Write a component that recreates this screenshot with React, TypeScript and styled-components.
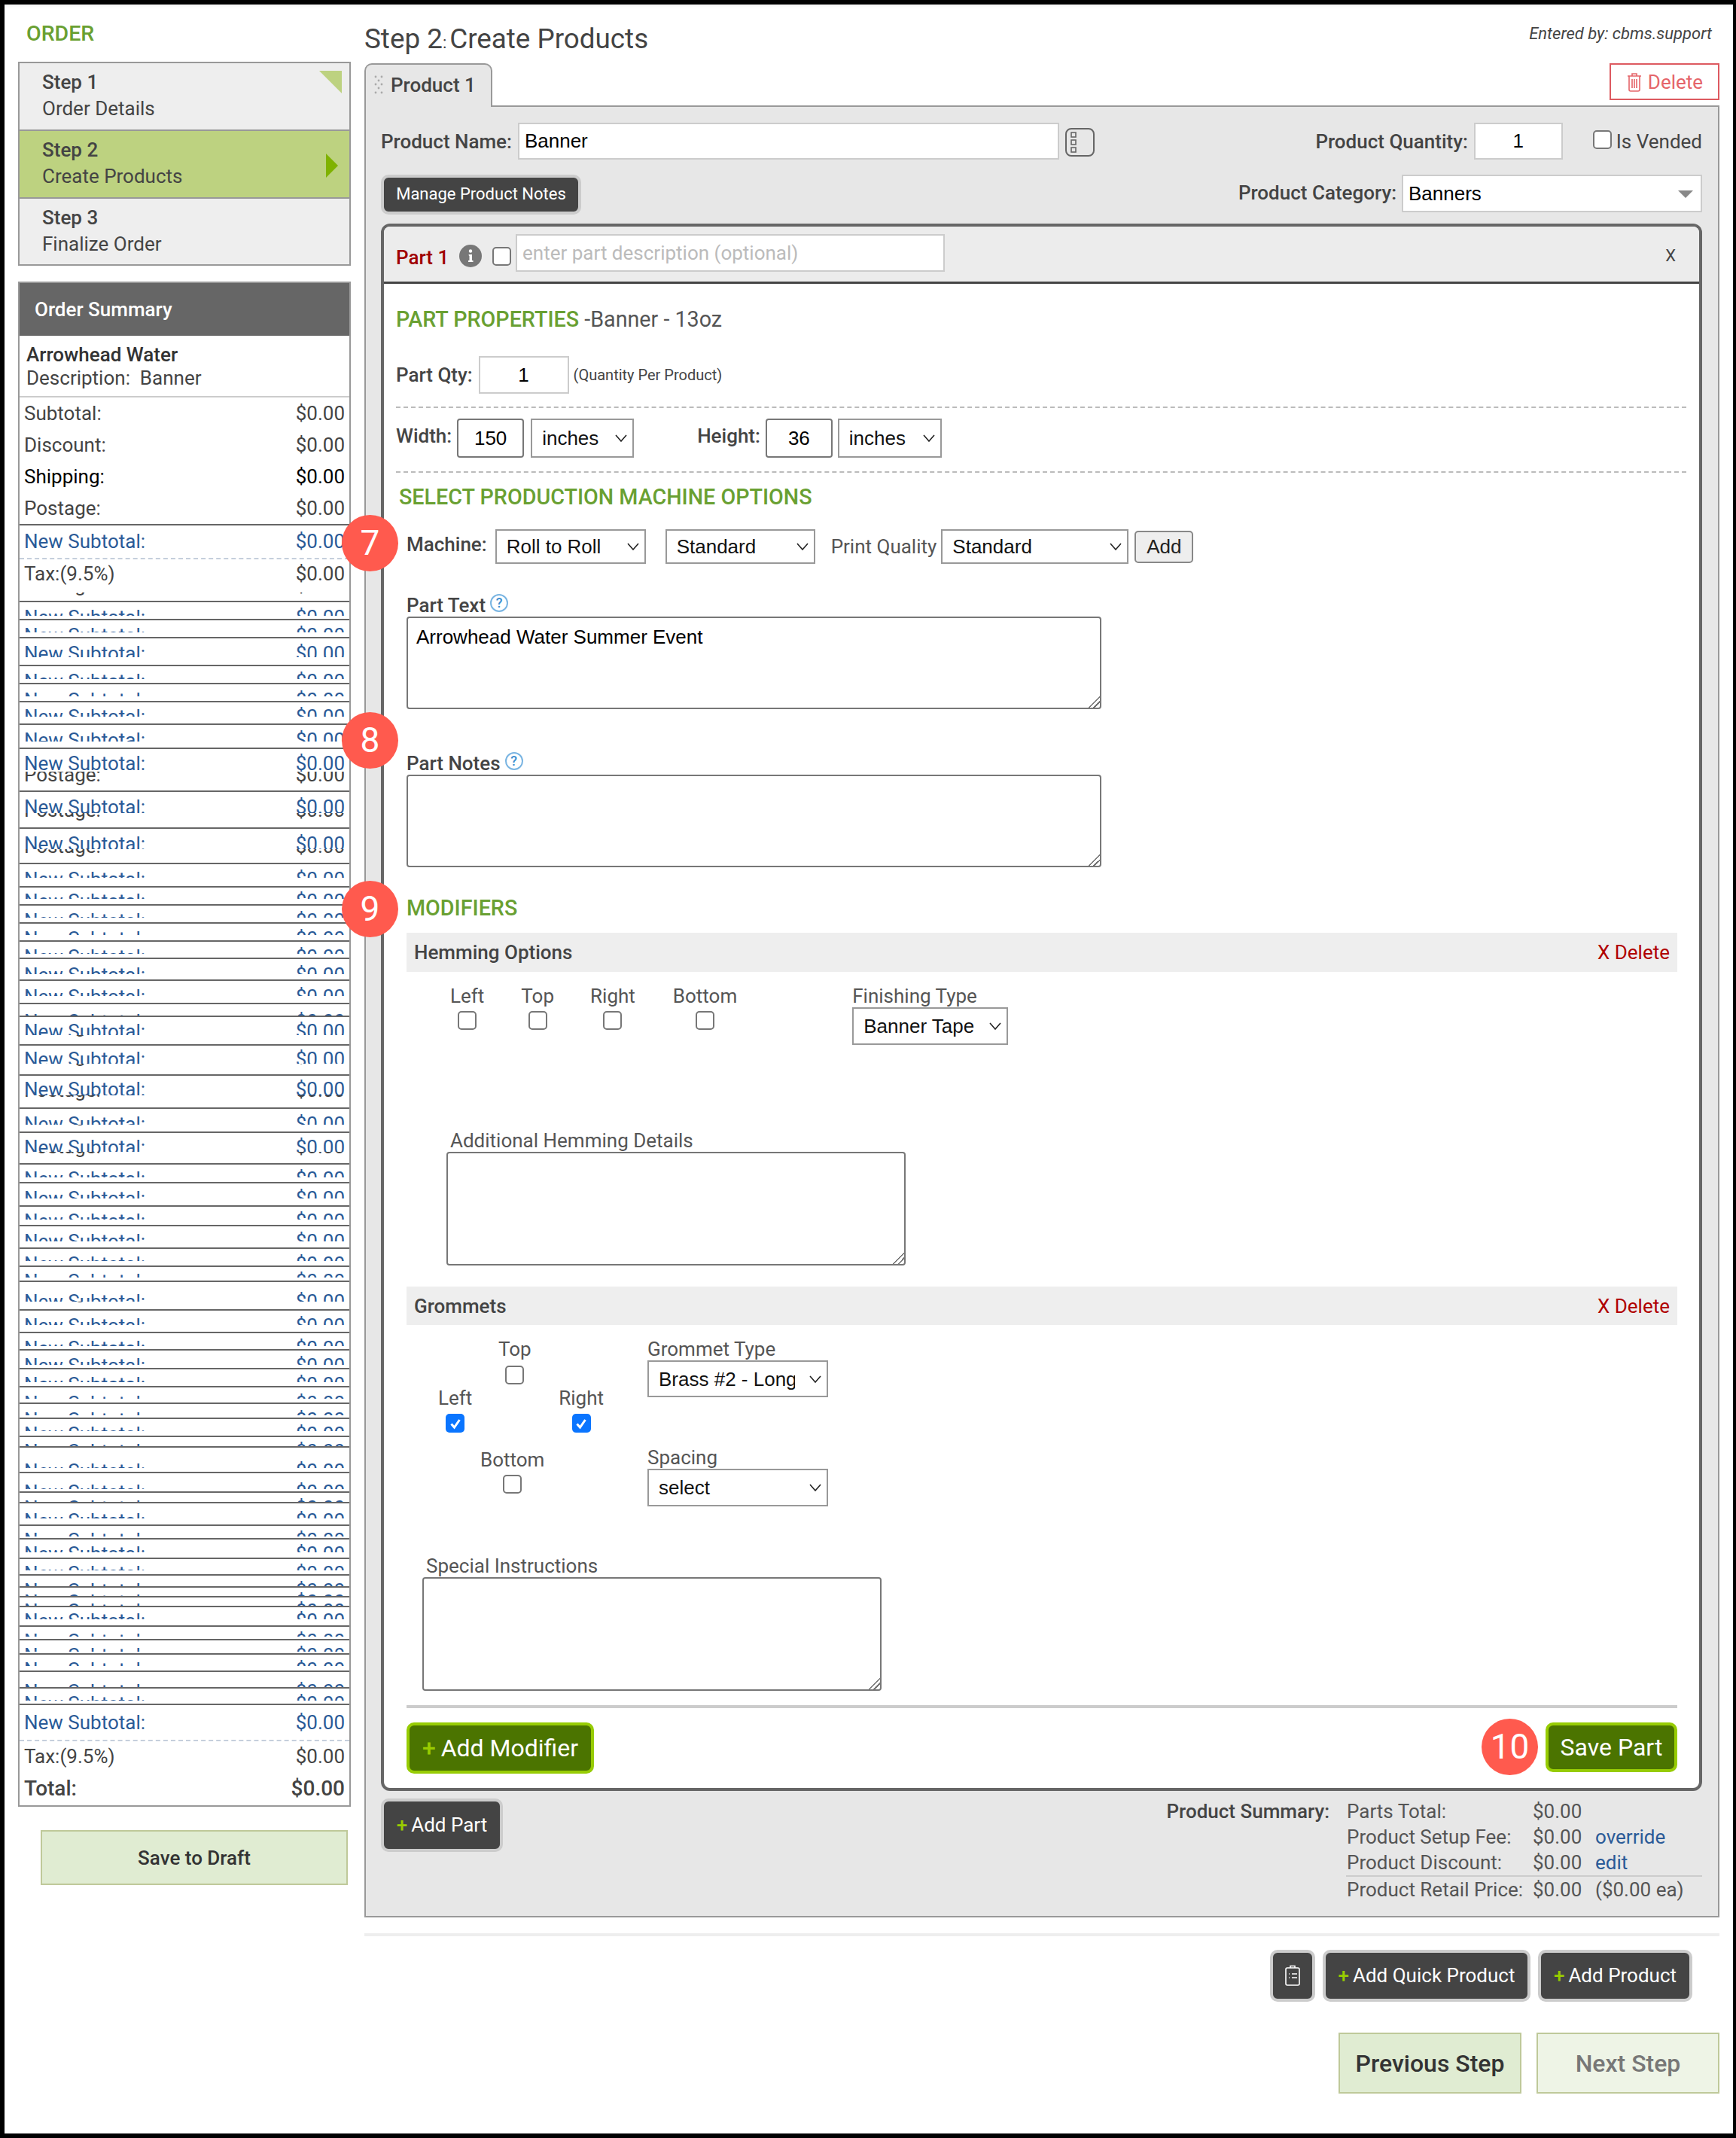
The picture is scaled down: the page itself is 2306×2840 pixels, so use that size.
import styled, { createGlobalStyle } from 'styled-components';

const controlFont = `26px "Liberation Sans", Arial, sans-serif`;

const GlobalStyle = createGlobalStyle`
  body {
    margin: 0;
    background: #fff;
    font-family: Roboto, "Liberation Sans", sans-serif;
    font-size: 26px;
    color: #444;
  }
  * {
    box-sizing: border-box;
  }
`;

const Frame = styled.div`
  display: flex;
  align-items: flex-start;
  width: 2306px;
  height: 2840px;
  padding-left: 18px;
  border-style: solid;
  border-color: #000;
  border-width: 6px 4px 6px 6px;
  box-shadow: inset 0 6px 6px -4px rgba(0, 0, 0, 0.06);
  overflow: hidden;
`;

/* sidebar */
const Sidebar = styled.aside`
  width: 442px;
  padding-top: 19px;
`;

const OrderTitle = styled.div`
  margin: 0 0 17px 11px;
  font-size: 28.5px;
  font-weight: 500;
  line-height: 40px;
  color: #69a032;
`;

const Steps = styled.div`
  border: 2px solid #999;
`;

const Step = styled.div<{ $active?: boolean }>`
  position: relative;
  height: 90px;
  padding: 8px 0 0 30px;
  line-height: 35px;
  background: ${(p) => (p.$active ? '#bdd280' : '#eee')};
  border-bottom: 2px solid #999;
  &:last-child {
    height: 87px;
    border-bottom: 0;
  }
`;

const StepName = styled.div`
  font-weight: 500;
`;

const DoneMark = styled.svg`
  position: absolute;
  top: 10px;
  right: 10px;
`;

const ActiveMark = styled.svg`
  position: absolute;
  top: 30px;
  right: 15px;
`;

const SummaryBox = styled.div`
  margin-top: 21px;
  border: 2px solid #999;
`;

const SummaryHeader = styled.div`
  height: 70px;
  padding-left: 20px;
  line-height: 70px;
  font-weight: 500;
  color: #fff;
  background: #666;
`;

const Customer = styled.div`
  height: 82px;
  padding: 10px 0 0 9px;
  line-height: 31px;
  border-bottom: 2px solid #ccc;
`;

const CustomerName = styled.div`
  font-weight: 500;
  color: #333;
`;

const Money = styled.div<{ $tone?: 'black' | 'blue' }>`
  display: flex;
  justify-content: space-between;
  height: 42px;
  padding: 0 6px 0 6px;
  line-height: 42px;
  color: ${(p) => (p.$tone === 'black' ? '#000' : p.$tone === 'blue' ? '#2a5a97' : '#444')};
`;

const BlueRow = styled.div<{ $height: number; $pad: number }>`
  height: ${(p) => p.$height}px;
  padding-top: ${(p) => p.$pad}px;
  border-top: 2px solid #666;
  border-bottom: 2px dashed #c5cfdc;
`;

const TaxRow = styled.div`
  position: relative;
  height: 55px;
  overflow: hidden;
`;

const TaxFront = styled.div`
  position: relative;
  z-index: 1;
  height: 46px;
  background: #fff;
  > div {
    margin-top: -2px;
  }
`;

const Squeezed = styled.div<{ $gap: number }>`
  position: relative;
  height: ${(p) => p.$gap}px;
  border-top: 2px solid #666;
  overflow: hidden;
`;

const SqueezedFront = styled.div<{ $clip: number; $top: number }>`
  position: relative;
  z-index: 1;
  height: ${(p) => p.$clip - 2}px;
  overflow: hidden;
  background: #fff;
  > div {
    margin-top: ${(p) => p.$top - 13.4}px;
  }
`;

const Ghost = styled.div<{ $top: number }>`
  position: absolute;
  top: ${(p) => p.$top}px;
  left: 0;
  right: 0;
`;

const ClosingTax = styled(Money)`
  height: 40px;
  line-height: 40px;
`;

const TotalRow = styled(Money)`
  height: 45px;
  line-height: 45px;
  font-size: 28px;
  font-weight: 500;
`;

const DraftButton = styled.button`
  display: block;
  width: 408px;
  height: 73px;
  margin: 31px 0 0 30px;
  font: 500 26px Roboto, sans-serif;
  color: #333;
  background: #e0ecd2;
  border: 2px solid #bfc99a;
`;

/* main column */
const Main = styled.main`
  width: 1800px;
  margin-left: 18px;
`;

const TitleBar = styled.div`
  display: flex;
  justify-content: space-between;
  height: 78px;
`;

const Title = styled.h1`
  margin: 24px 0 0;
  font-size: 36.8px;
  font-weight: 400;
  line-height: 44px;
  color: #444;
`;

const SmallColon = styled.span`
  margin-right: 4px;
  font-size: 22px;
`;

const EnteredBy = styled.div`
  margin: 25px 10px 0 0;
  font-size: 22px;
  font-style: italic;
  line-height: 28px;
`;

const TabBar = styled.div`
  display: flex;
  justify-content: space-between;
  align-items: flex-start;
  height: 56px;
`;

const Tab = styled.div`
  position: relative;
  z-index: 1;
  display: flex;
  align-items: center;
  width: 170px;
  height: 58px;
  padding: 0 0 3px 10px;
  font-weight: 500;
  background: #e7e7e7;
  border: 2px solid #999;
  border-bottom: 0;
  border-radius: 10px 10px 0 0;
`;

const DragDots = styled.svg`
  margin-right: 9px;
`;

const DeleteButton = styled.button`
  display: flex;
  align-items: center;
  justify-content: center;
  gap: 7px;
  width: 146px;
  height: 49px;
  padding: 0;
  font: 400 26px Roboto, sans-serif;
  color: #e5656a;
  background: #fff;
  border: 2px solid #dd5a60;
`;

const Panel = styled.section`
  height: 2407px;
  padding: 21px 21px 0 20px;
  background: #e7e7e7;
  border: 2px solid #999;
`;

const FieldRow = styled.div<{ $mt?: number; $height?: number }>`
  position: relative;
  display: flex;
  align-items: center;
  height: ${(p) => p.$height ?? 49}px;
  margin-top: ${(p) => p.$mt ?? 0}px;
`;

const Label = styled.label`
  font-weight: 500;
  white-space: nowrap;
`;

const TextField = styled.input<{ $width: number; $ml?: number; $center?: boolean; $height?: number }>`
  flex: none;
  width: ${(p) => p.$width}px;
  height: ${(p) => p.$height ?? 49}px;
  margin-left: ${(p) => p.$ml ?? 8}px;
  padding: 0 7px;
  font: ${controlFont};
  color: #000;
  text-align: ${(p) => (p.$center ? 'center' : 'left')};
  background: #fff;
  border: 2px solid #ccc;
  &::placeholder {
    font-family: Roboto, sans-serif;
    color: #bbb;
  }
`;

const NameIcon = styled.svg`
  flex: none;
  margin: 2px 0 0 8px;
`;

const Push = styled.div`
  margin-left: auto;
`;

const Vended = styled.label`
  display: flex;
  align-items: center;
  gap: 6px;
  margin-left: 40px;
  white-space: nowrap;
  > span {
    margin-top: -4px;
  }
`;

const DarkButton = styled.button<{ $width: number; $height?: number; $size?: number }>`
  display: flex;
  align-items: center;
  justify-content: center;
  gap: 5px;
  flex: none;
  width: ${(p) => p.$width}px;
  height: ${(p) => p.$height ?? 69}px;
  padding: 0 0 2px;
  font: 400 ${(p) => p.$size ?? 26}px Roboto, sans-serif;
  color: #fff;
  background: #444;
  border: 4px solid #ccc;
  border-radius: 10px;
`;

const Plus = styled.span`
  font-weight: 500;
  color: #9c0;
`;

const CategoryLabel = styled(Label)`
  margin-bottom: 6px;
`;

const CategoryBox = styled.div`
  position: relative;
  width: 399px;
  height: 50px;
  margin-left: 7px;
  margin-bottom: 3px;
  padding: 0 7px;
  font: ${controlFont};
  line-height: 46px;
  color: #000;
  background: #fff;
  border: 2px solid #ccc;
  &::after {
    content: '';
    position: absolute;
    top: 19px;
    right: 10px;
    border-top: 10px solid #888;
    border-left: 10px solid transparent;
    border-right: 10px solid transparent;
  }
`;

const Card = styled.div`
  height: 2082px;
  margin-top: 12px;
  background: #fff;
  border: 4px solid #666;
  border-radius: 12px;
`;

const CardHeader = styled.div`
  display: flex;
  align-items: flex-start;
  height: 76px;
  padding: 10px 31px 0 16px;
  background: #ececec;
  border-bottom: 3px solid #444;
  border-radius: 8px 8px 0 0;
`;

const PartName = styled.div`
  width: 84px;
  margin-top: 13px;
  font-weight: 500;
  line-height: 36px;
  color: #a00000;
`;

const InfoIcon = styled.svg`
  flex: none;
  margin-top: 14px;
`;

const Box = styled.span<{ $checked?: boolean; $mt?: number; $ml?: number }>`
  display: flex;
  align-items: center;
  justify-content: center;
  flex: none;
  width: 25px;
  height: 25px;
  margin-top: ${(p) => p.$mt ?? 0}px;
  margin-left: ${(p) => p.$ml ?? 0}px;
  background: ${(p) => (p.$checked ? '#0a75ff' : '#fff')};
  border: ${(p) => (p.$checked ? '0' : '2px solid #777')};
  border-radius: 5px;
`;

const Close = styled.div`
  margin: 11px 0 0 auto;
  font-size: 22px;
  line-height: 36px;
`;

const CardBody = styled.div`
  padding: 27px 17px 0 16px;
`;

const SectionTitle = styled.h2<{ $mt?: number; $ml?: number }>`
  position: relative;
  margin: ${(p) => p.$mt ?? 0}px 0 0 ${(p) => p.$ml ?? 0}px;
  font-size: 28.7px;
  font-weight: 500;
  line-height: 40px;
  color: #69a032;
`;

const Subtle = styled.span`
  font-weight: 400;
  color: #555;
`;

const Hint = styled.span`
  margin-left: 6px;
  font-size: 20px;
`;

const DashedLine = styled.div<{ $mt: number }>`
  margin-top: ${(p) => p.$mt}px;
  border-top: 2px dashed #bbb;
`;

const SizeField = styled(TextField)`
  border: 2px solid #777;
  border-radius: 4px;
`;

const OffsetLabel = styled(Label)<{ $ml?: number }>`
  margin-left: ${(p) => p.$ml ?? 0}px;
  margin-bottom: 6px;
`;

const SelectWrap = styled.div<{ $width: number; $height?: number; $ml?: number }>`
  position: relative;
  flex: none;
  width: ${(p) => p.$width}px;
  height: ${(p) => p.$height ?? 46}px;
  margin-left: ${(p) => p.$ml ?? 0}px;
`;

const Select = styled.select`
  appearance: none;
  display: block;
  width: 100%;
  height: 100%;
  padding: 0 42px 0 13px;
  font: ${controlFont};
  color: #111;
  background: #fff;
  border: 2px solid #999;
  border-radius: 0;
`;

const Chevron = styled.svg`
  position: absolute;
  top: 50%;
  right: 9px;
  margin-top: -5px;
  pointer-events: none;
`;

const Inset = styled.div`
  margin: 0 12px 0 14px;
`;

const PlainLabel = styled.span<{ $ml?: number }>`
  margin-left: ${(p) => p.$ml ?? 0}px;
  white-space: nowrap;
  color: #555;
`;

const AddButton = styled.button`
  width: 78px;
  height: 43px;
  margin-left: 8px;
  padding: 0;
  font: ${controlFont};
  color: #222;
  background: #eee;
  border: 2px solid #888;
  border-radius: 5px;
`;

const FieldLabel = styled.div<{ $mt?: number }>`
  position: relative;
  display: flex;
  align-items: center;
  gap: 6px;
  height: 30px;
  margin-top: ${(p) => p.$mt ?? 0}px;
  font-weight: 500;
`;

const HelpIcon = styled.span`
  width: 24px;
  height: 24px;
  margin-top: -6px;
  font-size: 18px;
  font-weight: 500;
  line-height: 20px;
  text-align: center;
  color: #3b8ed0;
  border: 2px solid #7ab5e2;
  border-radius: 50%;
`;

const Area = styled.textarea<{ $width: number; $height: number }>`
  display: block;
  width: ${(p) => p.$width}px;
  height: ${(p) => p.$height}px;
  padding: 10px 11px;
  font: ${controlFont};
  color: #000;
  background: #fff;
  border: 2px solid #777;
  border-radius: 4px;
  &::-webkit-resizer {
    background: linear-gradient(
      135deg,
      transparent 48%,
      #777 48%,
      #777 56%,
      transparent 56%,
      transparent 70%,
      #777 70%,
      #777 78%,
      transparent 78%
    );
  }
`;

const ModifierBar = styled.div<{ $mt: number; $height: number }>`
  display: flex;
  justify-content: space-between;
  align-items: center;
  height: ${(p) => p.$height}px;
  margin-top: ${(p) => p.$mt}px;
  padding: 0 10px;
  font-weight: 500;
  background: #eee;
`;

const RemoveLink = styled.span`
  font-weight: 400;
  color: #b00000;
`;

const HemRow = styled.div`
  display: flex;
  align-items: flex-start;
  margin: 17px 0 0 58px;
`;

const CheckColumn = styled.div<{ $ml?: number }>`
  display: flex;
  flex-direction: column;
  align-items: center;
  margin-left: ${(p) => p.$ml ?? 0}px;
  line-height: 30px;
  color: #555;
  white-space: nowrap;
`;

const Stacked = styled.div<{ $ml?: number; $mt?: number }>`
  margin-left: ${(p) => p.$ml ?? 0}px;
  margin-top: ${(p) => p.$mt ?? 0}px;
  line-height: 30px;
  color: #555;
  white-space: nowrap;
`;

const NotesBlock = styled.div<{ $ml: number; $mt: number }>`
  margin: ${(p) => p.$mt}px 0 0 ${(p) => p.$ml}px;
  line-height: 30px;
  color: #555;
`;

const NotesLabel = styled.div`
  margin-left: 5px;
`;

const GrommetGrid = styled.div`
  display: flex;
  align-items: flex-start;
  margin: 17px 0 0 42px;
`;

const Cross = styled.div`
  width: 220px;
`;

const CrossRow = styled.div<{ $ml?: number; $mt?: number; $spread?: boolean }>`
  display: flex;
  justify-content: ${(p) => (p.$spread ? 'space-between' : 'flex-start')};
  margin-left: ${(p) => p.$ml ?? 0}px;
  margin-top: ${(p) => p.$mt ?? 0}px;
`;

const Divider = styled.div`
  height: 4px;
  margin-top: 19px;
  background: #ccc;
`;

const CardFooter = styled.div`
  display: flex;
  justify-content: space-between;
  align-items: flex-start;
  margin-top: 19px;
`;

const GreenButton = styled.button<{ $width: number; $height: number }>`
  position: relative;
  display: flex;
  align-items: center;
  justify-content: center;
  gap: 7px;
  width: ${(p) => p.$width}px;
  height: ${(p) => p.$height}px;
  padding: 0;
  font: 400 32px Roboto, sans-serif;
  color: #fff;
  background: #4b7400;
  border: 4px solid #97cc04;
  border-radius: 10px;
`;

const StepBadge = styled.div<{ $left: number; $top: number }>`
  position: absolute;
  z-index: 5;
  left: ${(p) => p.$left}px;
  top: ${(p) => p.$top}px;
  width: 75px;
  height: 75px;
  font-size: 46px;
  font-weight: 400;
  line-height: 75px;
  text-align: center;
  color: #fff;
  background: #ff5a4e;
  border-radius: 50%;
`;

const PanelFooter = styled.div`
  display: flex;
  justify-content: space-between;
  align-items: flex-start;
  margin-top: 10px;
`;

const ProductSummary = styled.div`
  display: flex;
  align-items: flex-start;
  margin-right: 1px;
  line-height: 34px;
`;

const SummaryLabel = styled.div`
  margin-right: 22px;
  font-weight: 500;
`;

const SummaryGrid = styled.div`
  display: grid;
  grid-template-columns: 247px 83px 142px;
  width: 472px;
  padding-left: 1px;
  color: #555;
`;

const SummaryLine = styled.div`
  grid-column: 1 / -1;
  height: 2px;
  margin-left: -1px;
  background: #ccc;
`;

const TextLink = styled.a`
  color: #2a5a97;
`;

const PageLine = styled.div`
  height: 4px;
  margin-top: 21px;
  background: #eee;
`;

const ActionRow = styled.div`
  display: flex;
  justify-content: flex-end;
  gap: 10px;
  margin: 18px 36px 0 0;
`;

const StepNav = styled.div`
  display: flex;
  justify-content: flex-end;
  gap: 20px;
  margin-top: 41px;
`;

const NavButton = styled.button<{ $off?: boolean }>`
  width: 243px;
  height: 81px;
  padding: 0;
  font: 500 32px Roboto, sans-serif;
  color: ${(p) => (p.$off ? '#777' : '#333')};
  background: ${(p) => (p.$off ? '#eef4e6' : '#e0ecd2')};
  border: 2px solid #bfc99a;
`;

// line y, cap top, clip bottom, and where the row behind it sits
const squeezed: [number, number, number, number?][] = [
  [798, 12, 20], [822, 12, 18], [846, 12.5, 27, 3], [883, 12.5, 19], [907, 13, 18],
  [931, 11, 21], [961, 12.5, 23.5], [993, 11.7, 31.5, 26], [1050, 12, 30, 16], [1099, 12, 28.5, 15],
  [1146, 12.5, 20], [1177, 10.5, 17], [1201, 12.4, 18], [1225, 12, 17], [1249, 12.6, 17.6],
  [1272, 13, 22], [1301, 13, 22, -2], [1332, 15, 17], [1349, 11.7, 26, 4], [1387, 10.5, 26.4, 5],
  [1427, 10.6, 27.5, 11], [1471, 12, 23, 0], [1503, 11.6, 27, 10], [1545, 11.7, 18.6], [1570, 12.3, 21.8, -2],
  [1601, 11.8, 19], [1627, 12.6, 22.3, -2], [1657, 12.3, 18], [1681, 11.5, 15.7], [1701, 18, 27.5, 5],
  [1739, 12.2, 21], [1769, 12.3, 18.7], [1792, 12, 20.6], [1817, 12.5, 19], [1841, 13, 17.4],
  [1863, 13, 16.5], [1883, 12, 18], [1907, 11.6, 14], [1921, 23, 29], [1955, 17.5, 23],
  [1981, 12, 14], [1995, 15, 22], [2025, 11.6, 16], [2043, 11.7, 19], [2069, 11.6, 17],
  [2091, 12.6, 15.7], [2107, 11, 13], [2120, 10.7, 13.4], [2133, 10.7, 18.3], [2159, 11.5, 15],
  [2177, 12.7, 17], [2196, 12, 16.6], [2219, 18.8, 22], [2241, 12, 17.5],
];

const Down = () => (
  <Chevron width="16" height="10" viewBox="0 0 16 10" fill="none" stroke="#222" strokeWidth="1.6">
    <path d="M1 1l7 8 7-8" />
  </Chevron>
);

const Drop = ({ value, width, height, ml }: { value: string; width: number; height?: number; ml?: number }) => (
  <SelectWrap $width={width} $height={height} $ml={ml}>
    <Select defaultValue={value}>
      <option>{value}</option>
    </Select>
    <Down />
  </SelectWrap>
);

const Tick = () => (
  <svg width="18" height="18" viewBox="0 0 18 18" fill="none" stroke="#fff" strokeWidth="3">
    <path d="M3.5 9.5l4 4.5 7-10" />
  </svg>
);

const SubtotalLine = () => (
  <Money $tone="blue">
    <span>New Subtotal:</span>
    <span>$0.00</span>
  </Money>
);

const PostageLine = () => (
  <Money>
    <span>Postage:</span>
    <span>$0.00</span>
  </Money>
);

const App = () => {
  return (
    <>
      <GlobalStyle />
      <Frame>
        <Sidebar>
          <OrderTitle>ORDER</OrderTitle>
          <Steps>
            <Step>
              <StepName>Step 1</StepName>
              Order Details
              <DoneMark width="30" height="30" viewBox="0 0 30 30">
                <path d="M0 0h30v30z" fill="#bdd280" />
              </DoneMark>
            </Step>
            <Step $active>
              <StepName>Step 2</StepName>
              Create Products
              <ActiveMark width="16" height="32" viewBox="0 0 16 32">
                <path d="M0 0l16 16L0 32z" fill="#7fb200" />
              </ActiveMark>
            </Step>
            <Step>
              <StepName>Step 3</StepName>
              Finalize Order
            </Step>
          </Steps>

          <SummaryBox>
            <SummaryHeader>Order Summary</SummaryHeader>
            <Customer>
              <CustomerName>Arrowhead Water</CustomerName>
              Description:&nbsp; Banner
            </Customer>
            <Money>
              <span>Subtotal:</span>
              <span>$0.00</span>
            </Money>
            <Money>
              <span>Discount:</span>
              <span>$0.00</span>
            </Money>
            <Money $tone="black">
              <span>Shipping:</span>
              <span>$0.00</span>
            </Money>
            <PostageLine />
            <BlueRow $height={47} $pad={0}>
              <SubtotalLine />
            </BlueRow>
            <TaxRow>
              <Ghost $top={13}>
                <PostageLine />
              </Ghost>
              <TaxFront>
                <Money>
                  <span>Tax:(9.5%)</span>
                  <span>$0.00</span>
                </Money>
              </TaxFront>
            </TaxRow>
            {squeezed.map(([line, top, clip, ghost], i) => {
              const next = i + 1 < squeezed.length ? squeezed[i + 1][0] : 2263;
              return (
                <Squeezed key={line} $gap={next - line}>
                  {ghost !== undefined && (
                    <Ghost $top={ghost - 13.4}>
                      <PostageLine />
                    </Ghost>
                  )}
                  <SqueezedFront $clip={clip} $top={top}>
                    <SubtotalLine />
                  </SqueezedFront>
                </Squeezed>
              );
            })}
            <BlueRow $height={50} $pad={2}>
              <SubtotalLine />
            </BlueRow>
            <ClosingTax>
              <span>Tax:(9.5%)</span>
              <span>$0.00</span>
            </ClosingTax>
            <TotalRow>
              <span>Total:</span>
              <span>$0.00</span>
            </TotalRow>
          </SummaryBox>
          <DraftButton>Save to Draft</DraftButton>
        </Sidebar>

        <Main>
          <TitleBar>
            <Title>
              Step 2<SmallColon>:</SmallColon>Create Products
            </Title>
            <EnteredBy>Entered by: cbms.support</EnteredBy>
          </TitleBar>
          <TabBar>
            <Tab>
              <DragDots width="14" height="26" viewBox="0 0 14 26" fill="#aaa">
                <circle cx="3" cy="2" r="1.4" />
                <circle cx="11" cy="2" r="1.4" />
                <circle cx="7" cy="7" r="1.4" />
                <circle cx="3" cy="12" r="1.4" />
                <circle cx="11" cy="12" r="1.4" />
                <circle cx="7" cy="17" r="1.4" />
                <circle cx="3" cy="23" r="1.4" />
                <circle cx="11" cy="23" r="1.4" />
              </DragDots>
              Product 1
            </Tab>
            <DeleteButton>
              <svg width="22" height="26" viewBox="0 0 22 26" fill="none" stroke="#e5656a" strokeWidth="1.6">
                <path d="M2 5h18M8 5V2h6v3M4 5v18a2 2 0 0 0 2 2h10a2 2 0 0 0 2-2V5M8 9v12M11 9v12M14 9v12" />
              </svg>
              Delete
            </DeleteButton>
          </TabBar>

          <Panel>
            <FieldRow>
              <Label>Product Name:</Label>
              <TextField $width={719} defaultValue="Banner" />
              <NameIcon width="40" height="40" viewBox="0 0 40 40" fill="none" stroke="#666" strokeWidth="2">
                <rect x="1" y="2" width="37" height="36" rx="7" />
                <rect x="8" y="7" width="6" height="6" strokeWidth="1.6" />
                <rect x="8" y="17" width="6" height="6" strokeWidth="1.6" />
                <rect x="8" y="27" width="6" height="6" strokeWidth="1.6" />
              </NameIcon>
              <Push />
              <Label>Product Quantity:</Label>
              <TextField $width={118} $center defaultValue="1" />
              <Vended>
                <Box />
                Is Vended
              </Vended>
            </FieldRow>
            <FieldRow $mt={20} $height={53}>
              <DarkButton $width={266} $height={53} $size={22}>
                Manage Product Notes
              </DarkButton>
              <Push />
              <CategoryLabel>Product Category:</CategoryLabel>
              <CategoryBox>Banners</CategoryBox>
            </FieldRow>

            <Card>
              <CardHeader>
                <PartName>Part 1</PartName>
                <InfoIcon width="30" height="30" viewBox="0 0 30 30">
                  <circle cx="15" cy="15" r="15" fill="#777" />
                  <circle cx="15" cy="8.5" r="2.2" fill="#fff" />
                  <path d="M12.5 13h4.5v8h1.5v2h-6.5v-2h1.5v-6h-.5z" fill="#fff" />
                </InfoIcon>
                <Box $mt={17} $ml={14} />
                <TextField $width={570} $ml={6} $height={50} placeholder="enter part description (optional)" />
                <Close>X</Close>
              </CardHeader>

              <CardBody>
                <SectionTitle>
                  PART PROPERTIES <Subtle>-Banner - 13oz</Subtle>
                </SectionTitle>
                <FieldRow $mt={29} $height={50}>
                  <Label>Part Qty:</Label>
                  <TextField $width={120} $ml={8} $center $height={50} defaultValue="1" />
                  <Hint>(Quantity Per Product)</Hint>
                </FieldRow>
                <DashedLine $mt={17} />
                <FieldRow $mt={14} $height={52}>
                  <OffsetLabel>Width:</OffsetLabel>
                  <SizeField $width={89} $ml={7} $center $height={52} defaultValue="150" />
                  <Drop value="inches" width={137} height={52} ml={9} />
                  <OffsetLabel $ml={84}>Height:</OffsetLabel>
                  <SizeField $width={89} $ml={7} $center $height={52} defaultValue="36" />
                  <Drop value="inches" width={138} height={52} ml={7} />
                </FieldRow>
                <DashedLine $mt={18} />
                <SectionTitle $mt={12} $ml={4}>
                  SELECT PRODUCTION MACHINE OPTIONS
                </SectionTitle>
                <Inset>
                  <FieldRow $mt={23} $height={46}>
                    <StepBadge $left={-86} $top={-19}>7</StepBadge>
                    <OffsetLabel>Machine:</OffsetLabel>
                    <Drop value="Roll to Roll" width={200} ml={11} />
                    <Drop value="Standard" width={199} ml={26} />
                    <PlainLabel $ml={21}>Print Quality</PlainLabel>
                    <Drop value="Standard" width={249} ml={6} />
                    <AddButton>Add</AddButton>
                  </FieldRow>

                  <FieldLabel $mt={40}>
                    Part Text
                    <HelpIcon>?</HelpIcon>
                  </FieldLabel>
                  <Area $width={923} $height={123} defaultValue="Arrowhead Water Summer Event" />

                  <FieldLabel $mt={57}>
                    <StepBadge $left={-86} $top={-53}>8</StepBadge>
                    Part Notes
                    <HelpIcon>?</HelpIcon>
                  </FieldLabel>
                  <Area $width={923} $height={123} />

                  <SectionTitle $mt={34}>
                    <StepBadge $left={-86} $top={-16}>9</StepBadge>
                    MODIFIERS
                  </SectionTitle>

                  <ModifierBar $mt={13} $height={52}>
                    Hemming Options
                    <RemoveLink>X Delete</RemoveLink>
                  </ModifierBar>
                  <HemRow>
                    <CheckColumn>
                      Left
                      <Box $mt={5} />
                    </CheckColumn>
                    <CheckColumn $ml={49}>
                      Top
                      <Box $mt={5} />
                    </CheckColumn>
                    <CheckColumn $ml={48}>
                      Right
                      <Box $mt={5} />
                    </CheckColumn>
                    <CheckColumn $ml={50}>
                      Bottom
                      <Box $mt={5} />
                    </CheckColumn>
                    <Stacked $ml={153}>
                      Finishing Type
                      <Drop value="Banner Tape" width={207} height={50} />
                    </Stacked>
                  </HemRow>
                  <NotesBlock $ml={53} $mt={112}>
                    <NotesLabel>Additional Hemming Details</NotesLabel>
                    <Area $width={610} $height={151} />
                  </NotesBlock>

                  <ModifierBar $mt={28} $height={51}>
                    Grommets
                    <RemoveLink>X Delete</RemoveLink>
                  </ModifierBar>
                  <GrommetGrid>
                    <Cross>
                      <CrossRow $ml={80}>
                        <CheckColumn>
                          Top
                          <Box $mt={7} />
                        </CheckColumn>
                      </CrossRow>
                      <CrossRow $mt={3} $spread>
                        <CheckColumn>
                          Left
                          <Box $mt={6} $checked>
                            <Tick />
                          </Box>
                        </CheckColumn>
                        <CheckColumn>
                          Right
                          <Box $mt={6} $checked>
                            <Tick />
                          </Box>
                        </CheckColumn>
                      </CrossRow>
                      <CrossRow $ml={56} $mt={21}>
                        <CheckColumn>
                          Bottom
                          <Box $mt={5} />
                        </CheckColumn>
                      </CrossRow>
                    </Cross>
                    <Stacked $ml={58}>
                      Grommet Type
                      <Drop value="Brass #2 - Long Reach" width={240} height={49} />
                      <Stacked $mt={65}>
                        Spacing
                        <Drop value="select" width={240} height={50} />
                      </Stacked>
                    </Stacked>
                  </GrommetGrid>
                  <NotesBlock $ml={21} $mt={64}>
                    <NotesLabel>Special Instructions</NotesLabel>
                    <Area $width={610} $height={151} />
                  </NotesBlock>
                  <Divider />
                  <CardFooter>
                    <GreenButton $width={249} $height={68}>
                      <Plus>+</Plus> Add Modifier
                    </GreenButton>
                    <GreenButton $width={175} $height={66}>
                      <StepBadge $left={-89} $top={-9}>10</StepBadge>
                      Save Part
                    </GreenButton>
                  </CardFooter>
                </Inset>
              </CardBody>
            </Card>

            <PanelFooter>
              <DarkButton $width={162} $height={71}>
                <Plus>+</Plus> Add Part
              </DarkButton>
              <ProductSummary>
                <SummaryLabel>Product Summary:</SummaryLabel>
                <SummaryGrid>
                  <span>Parts Total:</span>
                  <span>$0.00</span>
                  <span />
                  <span>Product Setup Fee:</span>
                  <span>$0.00</span>
                  <TextLink>override</TextLink>
                  <span>Product Discount:</span>
                  <span>$0.00</span>
                  <TextLink>edit</TextLink>
                  <SummaryLine />
                  <span>Product Retail Price:</span>
                  <span>$0.00</span>
                  <span>($0.00 ea)</span>
                </SummaryGrid>
              </ProductSummary>
            </PanelFooter>
          </Panel>

          <PageLine />
          <ActionRow>
            <DarkButton $width={60}>
              <svg width="20" height="28" viewBox="0 0 20 28" fill="none" stroke="#fff" strokeWidth="1.6">
                <rect x="1" y="4" width="18" height="23" rx="2" />
                <path d="M7 4V1.5h6V4M5 12h1M9 12h7M5 17h1M9 17h7" />
              </svg>
            </DarkButton>
            <DarkButton $width={276}>
              <Plus>+</Plus> Add Quick Product
            </DarkButton>
            <DarkButton $width={205}>
              <Plus>+</Plus> Add Product
            </DarkButton>
          </ActionRow>
          <StepNav>
            <NavButton>Previous Step</NavButton>
            <NavButton $off>Next Step</NavButton>
          </StepNav>
        </Main>
      </Frame>
    </>
  );
};

export default App;
